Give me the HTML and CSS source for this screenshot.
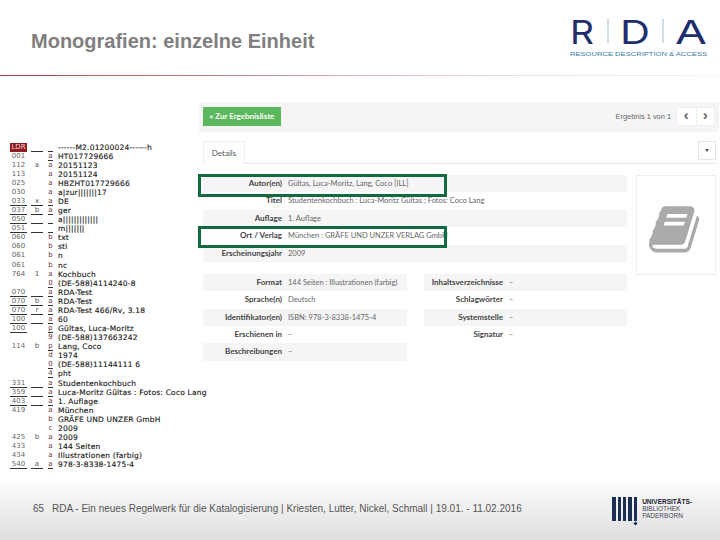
FILE: index.html
```html
<!DOCTYPE html>
<html lang="de">
<head>
<meta charset="utf-8">
<title>Monografien: einzelne Einheit</title>
<link rel="stylesheet" href="styles.css">
</head>
<body>
<div class="slide">
  <header class="head">
    <h1 class="title">Monografien: einzelne Einheit</h1>
    <svg class="rda" viewBox="0 0 138 38" width="138" height="38" aria-label="RDA">
      <text class="rda-l" x="0" y="24.5" textLength="24" lengthAdjust="spacingAndGlyphs">R</text>
      <rect class="rda-d" x="37.5" y="0" width="1" height="24"/>
      <text class="rda-l" x="50" y="24.5" textLength="30" lengthAdjust="spacingAndGlyphs">D</text>
      <rect class="rda-d" x="92.5" y="0" width="1" height="24"/>
      <text class="rda-l" x="105" y="24.5" textLength="32" lengthAdjust="spacingAndGlyphs">A</text>
      <text class="rda-s" x="0" y="36.5" textLength="137" lengthAdjust="spacingAndGlyphs">RESOURCE DESCRIPTION &amp; ACCESS</text>
    </svg>
  </header>
  <div class="rule"></div>
  <main class="main">
    <section class="marc">
      <div class="m"><span class="t ldr">LDR</span><span class="i u"></span><span class="s u"></span><span class="v">------M2.01200024------h</span></div>
      <div class="m"><span class="t">001</span><span class="i"></span><span class="s u">a</span><span class="v">HT017729666</span></div>
      <div class="m"><span class="t">112</span><span class="i">a</span><span class="s">a</span><span class="v">20151123</span></div>
      <div class="m"><span class="t">113</span><span class="i"></span><span class="s">a</span><span class="v">20151124</span></div>
      <div class="m"><span class="t">025</span><span class="i"></span><span class="s">a</span><span class="v">HBZHT017729666</span></div>
      <div class="m"><span class="t">030</span><span class="i"></span><span class="s">a</span><span class="v">a|zur|||||||17</span></div>
      <div class="m"><span class="t u">033</span><span class="i u">x</span><span class="s u">a</span><span class="v">DE</span></div>
      <div class="m"><span class="t u">037</span><span class="i u">b</span><span class="s u">a</span><span class="v">ger</span></div>
      <div class="m"><span class="t u">050</span><span class="i u"></span><span class="s u"></span><span class="v">a|||||||||||||</span></div>
      <div class="m"><span class="t u">051</span><span class="i u"></span><span class="s u"></span><span class="v">m|||||||</span></div>
      <div class="m"><span class="t">060</span><span class="i"></span><span class="s">b</span><span class="v">txt</span></div>
      <div class="m"><span class="t">060</span><span class="i"></span><span class="s">b</span><span class="v">sti</span></div>
      <div class="m"><span class="t">061</span><span class="i"></span><span class="s">b</span><span class="v">n</span></div>
      <div class="m"><span class="t">061</span><span class="i"></span><span class="s">b</span><span class="v">nc</span></div>
      <div class="m"><span class="t">764</span><span class="i">1</span><span class="s">a</span><span class="v">Kochbuch</span></div>
      <div class="m"><span class="t"></span><span class="i"></span><span class="s u">0</span><span class="v">(DE-588)4114240-8</span></div>
      <div class="m"><span class="t u">070</span><span class="i u"></span><span class="s u">a</span><span class="v">RDA-Test</span></div>
      <div class="m"><span class="t u">070</span><span class="i u">b</span><span class="s u">a</span><span class="v">RDA-Test</span></div>
      <div class="m"><span class="t u">070</span><span class="i u">r</span><span class="s u">a</span><span class="v">RDA-Test 466/Rv, 3.18</span></div>
      <div class="m"><span class="t u">100</span><span class="i u"></span><span class="s u">a</span><span class="v">60</span></div>
      <div class="m"><span class="t u">100</span><span class="i"></span><span class="s u">p</span><span class="v">Gültas, Luca-Moritz</span></div>
      <div class="m"><span class="t"></span><span class="i"></span><span class="s">9</span><span class="v">(DE-588)137663242</span></div>
      <div class="m"><span class="t">114</span><span class="i">b</span><span class="s u">p</span><span class="v">Lang, Coco</span></div>
      <div class="m"><span class="t"></span><span class="i"></span><span class="s">d</span><span class="v">1974</span></div>
      <div class="m"><span class="t"></span><span class="i"></span><span class="s u">0</span><span class="v">(DE-588)11144111 6</span></div>
      <div class="m"><span class="t"></span><span class="i"></span><span class="s u">4</span><span class="v">pht</span></div>
      <div class="m"><span class="t u">331</span><span class="i u"></span><span class="s u">a</span><span class="v">Studentenkochbuch</span></div>
      <div class="m"><span class="t u">359</span><span class="i u"></span><span class="s u">a</span><span class="v">Luca-Moritz Gültas : Fotos: Coco Lang</span></div>
      <div class="m"><span class="t u">403</span><span class="i u"></span><span class="s u">a</span><span class="v">1. Auflage</span></div>
      <div class="m"><span class="t">419</span><span class="i"></span><span class="s">a</span><span class="v">München</span></div>
      <div class="m"><span class="t"></span><span class="i"></span><span class="s">b</span><span class="v">GRÄFE UND UNZER GmbH</span></div>
      <div class="m"><span class="t"></span><span class="i"></span><span class="s">c</span><span class="v">2009</span></div>
      <div class="m"><span class="t">425</span><span class="i">b</span><span class="s">a</span><span class="v">2009</span></div>
      <div class="m"><span class="t">433</span><span class="i"></span><span class="s">a</span><span class="v">144 Seiten</span></div>
      <div class="m"><span class="t">434</span><span class="i"></span><span class="s">a</span><span class="v">Illustrationen (farbig)</span></div>
      <div class="m"><span class="t u">540</span><span class="i u">a</span><span class="s u">a</span><span class="v">978-3-8338-1475-4</span></div>
    </section>
    <section class="panel">
      <div class="topbar">
        <a class="back">« Zur Ergebnisliste</a>
        <div class="pager">
          <span class="count">Ergebnis 1 von 1</span>
          <div class="btns">
            <span class="pbtn">‹</span><span class="pbtn">›</span>
          </div>
        </div>
      </div>
      <div class="tabs">
        <span class="tab">Details</span>
        <span class="drop"><i class="caret"></i></span>
      </div>
      <div class="body">
        <div class="fields">
          <div class="table">
            <div class="row"><b class="k">Autor(en)</b><span class="val">Gültas, Luca-Moritz, Lang, Coco [ILL]</span></div>
            <div class="row"><b class="k">Titel</b><span class="val">Studentenkochbuch : Luca-Moritz Gültas ; Fotos: Coco Lang</span></div>
            <div class="row"><b class="k">Auflage</b><span class="val">1. Auflage</span></div>
            <div class="row"><b class="k">Ort / Verlag</b><span class="val">München : GRÄFE UND UNZER VERLAG GmbH</span></div>
            <div class="row"><b class="k">Erscheinungsjahr</b><span class="val">2009</span></div>
          </div>
          <div class="cols">
            <div class="table narrow">
              <div class="row"><b class="k">Format</b><span class="val">144 Seiten : Illustrationen (farbig)</span></div>
              <div class="row"><b class="k">Sprache(n)</b><span class="val">Deutsch</span></div>
              <div class="row"><b class="k">Identifikator(en)</b><span class="val">ISBN: 978-3-8338-1475-4</span></div>
              <div class="row"><b class="k">Erschienen in</b><span class="val">–</span></div>
              <div class="row"><b class="k">Beschreibungen</b><span class="val">–</span></div>
            </div>
            <div class="table narrow second">
              <div class="row"><b class="k">Inhaltsverzeichnisse</b><span class="val">–</span></div>
              <div class="row"><b class="k">Schlagwörter</b><span class="val">–</span></div>
              <div class="row"><b class="k">Systemstelle</b><span class="val">–</span></div>
              <div class="row"><b class="k">Signatur</b><span class="val">–</span></div>
            </div>
          </div>
        </div>
        <div class="cover">
          <svg class="book" viewBox="0 0 1792 1792" width="54" height="54" aria-hidden="true"><path d="M1639 492q40 57 18 129l-275 906q-19 64-76.500 107.500t-122.500 43.500h-923q-77 0-148.500-53.500t-99.500-131.500q-24-67-2-127 0-4 3-27t4-37q1-8-3-21.500t-3-19.500q2-11 8-21t16.500-23.500 16.500-23.500q23-38 45-91.500t30-91.500q3-10 .5-30t-.5-28q3-11 17-28t17-23q21-36 42-92t25-90q1-9-2.500-32t.5-28q4-13 22-30.500t22-22.500q19-26 42.500-84.500t27.500-96.500q1-8-3-25.500t-2-26.500q2-8 9-18t18-23 17-21q8-12 16.500-30.500t15-35 16-36 19.500-32 26.500-23.500 36-11.500 47.500 5.500l-1 3q38-9 51-9h761q74 0 114 56t18 130l-274 906q-36 119-71.500 153.500t-128.500 34.500h-869q-27 0-38 15-11 16-1 43 24 70 144 70h923q29 0 56-15.500t35-41.500l300-987q7-22 5-57 38 15 59 43zm-1064 2q-4 13 2 22.500t20 9.500h608q13 0 25.500-9.500t16.500-22.500l21-64q4-13-2-22.500t-20-9.500h-608q-13 0-25.500 9.500t-16.500 22.500zm-83 256q-4 13 2 22.500t20 9.500h608q13 0 25.500-9.500t16.500-22.500l21-64q4-13-2-22.500t-20-9.500h-608q-13 0-25.500 9.500t-16.500 22.500z"/></svg>
        </div>
      </div>
      <div class="mark mark-a"></div>
      <div class="mark mark-b"></div>
    </section>
  </main>
  <footer class="foot">
    <span class="num">65</span>
    <span class="ftext">RDA - Ein neues Regelwerk für die Katalogisierung | Kriesten, Lutter, Nickel, Schmall | 19.01. - 11.02.2016</span>
    <div class="ub">
      <div class="ub-bars"><i></i><i></i><i></i><i></i><i class="last"></i></div>
      <div class="ub-text"><b>UNIVERSITÄTS-</b><span>BIBLIOTHEK</span><span>PADERBORN</span></div>
    </div>
  </footer>
</div>
</body>
</html>
```

FILE: styles.css
```css
* { box-sizing: border-box; }
html, body { margin: 0; padding: 0; background: #fff; }
.slide { width: 720px; height: 540px; display: flex; flex-direction: column; overflow: hidden; }

.head { height: 75px; padding: 19px 12px 0 31px; display: flex; justify-content: space-between; align-items: flex-start; }
.title { margin: 10px 0 0; font: bold 20px/24px "Liberation Sans", Arial, sans-serif; color: #808080; }
.rda { display: block; overflow: visible; }
.rda-l { font: 400 33px "Inter", "Liberation Sans", sans-serif; fill: #1f2f6e; }
.rda-d { fill: #9fc0d4; }
.rda-s { font: 5px "Liberation Sans", sans-serif; fill: #3b7da6; }
.rule { height: 1px; flex: none; background: linear-gradient(90deg, #a8454a 0%, #c08084 30%, #ead8d9 65%, #fbf8f8 100%); }

.main { flex: 1; display: flex; align-items: flex-start; min-height: 0; }

.marc { width: 199px; flex: none; margin: 66.5px 0 0 10px; font: 7.5px/9.09px "DejaVu Sans", sans-serif; color: #222; -webkit-text-stroke: .15px #222; }
.m { display: flex; height: 9.09px; white-space: nowrap; }
.t { width: 17px; flex: none; margin-right: 4px; color: #666; -webkit-text-stroke: 0; text-align: center; font-size: 7px; }
.i { width: 12px; flex: none; margin-right: 5px; color: #555; text-align: center; -webkit-text-stroke: 0; font-size: 7px; }
.s { width: 5px; flex: none; margin-right: 5px; color: #6b3535; text-align: center; -webkit-text-stroke: 0; font-size: 7px; }
.u { border-bottom: 1px solid #333; height: 9px; }
.ldr { background: #8e1b1f; color: #f0d0d0; }
.v { flex: none; letter-spacing: .2px; }

.panel { position: relative; width: 521px; flex: none; margin-left: -10px; margin-top: 26px; font: 8px/17.45px "Lato", sans-serif; color: #666; }
.topbar { height: 30px; background: #f5f5f5; margin-right: 1px; padding: 5px 4px 0 4px; display: flex; justify-content: space-between; align-items: flex-start; }
.back { width: 78px; height: 19px; background: #5cb85c; color: #fff; font: 700 8px/19px "Lato", sans-serif; text-align: center; }
.pager { display: flex; gap: 5px; }
.count { font: 7.4px/19px "Liberation Sans", sans-serif; color: #666; }
.btns { display: flex; background: #fff; border: 1px solid #eee; height: 19px; }
.pbtn { width: 18.5px; text-align: center; font: bold 15px/14px "Liberation Sans", sans-serif; color: #666; }
.pbtn + .pbtn { border-left: 1px solid #eee; }

.tabs { margin: 9px 4px 0; height: 23px; border-bottom: 1px solid #e6e6e6; display: flex; justify-content: space-between; }
.tab { width: 42px; height: 23px; background: #fff; border: 1px solid #eee; border-bottom: 0; text-align: center; font: 8px/22px "Lato", sans-serif; color: #555; }
.drop { width: 18px; height: 19px; border: 1px solid #e6e6e6; display: flex; align-items: center; justify-content: center; }
.caret { border: 2px solid transparent; border-top: 3px solid #555; border-bottom: 0; }

.body { margin: 11px 4px 0; display: flex; justify-content: space-between; align-items: flex-start; }
.fields { width: 424px; }
.table { width: 100%; }
.row { display: flex; height: 17.45px; white-space: nowrap; }
.table .row:nth-child(odd) { background: #f5f5f5; }
.k { width: 79px; flex: none; text-align: right; font-weight: 700; color: #444; }
.val { margin-left: 6px; font-size: 7.5px; }
.cols { display: flex; justify-content: space-between; margin-top: 11.5px; }
.narrow { width: 204px; }
.second { width: 203px; }
.cover { width: 80px; height: 100px; border: 1px solid #eee; display: flex; align-items: center; justify-content: center; padding-top: 8px; }
.book { fill: #aaa; }

.mark { position: absolute; left: -1px; width: 249px; border: 3px solid #116b3e; }
.mark-a { top: 72px; height: 23px; }
.mark-b { top: 124px; height: 22px; }

.foot { height: 62px; flex: none; padding: 0 28px 0 33px; background: linear-gradient(#fff 0%, #f3f3f3 35%, #dfdfdf 100%); display: flex; align-items: flex-start; font: 10px/12px "Liberation Sans", sans-serif; color: #555; }
.num { margin-top: 25px; width: 19px; flex: none; }
.ftext { margin-top: 25px; flex: none; white-space: nowrap; }
.ub { margin-top: 19px; margin-left: auto; display: flex; gap: 5px; }
.ub-bars { display: flex; gap: 2px; height: 25px; }
.ub-bars i { width: 3.4px; height: 24px; background: #1b2f52; position: relative; }
.ub-bars .last::after { content: ""; position: absolute; left: 0; top: 25px; width: 3px; height: 3px; background: #1b2f52; transform: rotate(45deg); }
.ub-text { display: flex; flex-direction: column; font: 6.5px/7px "Liberation Sans", sans-serif; color: #445; margin-top: 1px; }
.ub-text b { color: #223; }
```
